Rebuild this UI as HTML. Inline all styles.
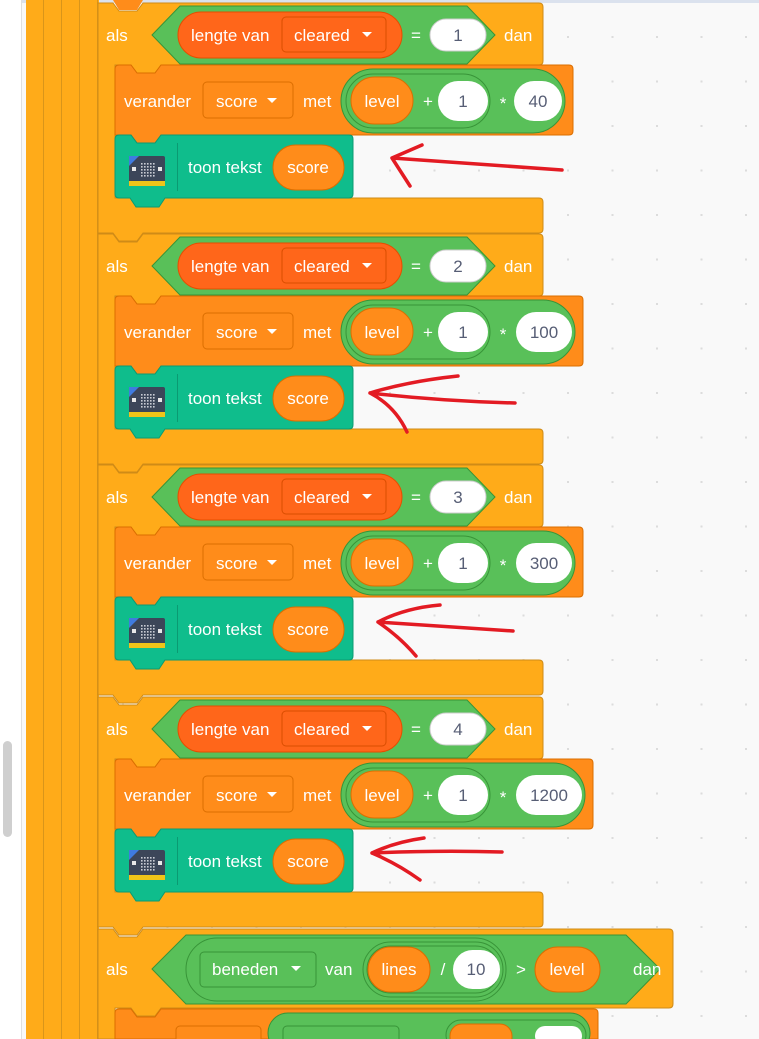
<!DOCTYPE html>
<html><head><meta charset="utf-8"><style>
html,body{margin:0;padding:0;width:759px;height:1039px;overflow:hidden;background:#f9f9f9}
svg{display:block}
text{font-family:"Liberation Sans",sans-serif;font-size:17px;fill:#fff}
.d{fill:#575e75}
.m{text-anchor:middle}
</style></head><body>
<svg width="759" height="1039" viewBox="0 0 759 1039" xmlns="http://www.w3.org/2000/svg">
<defs>
<pattern id="dots" x="33" y="-8.5" width="44.5" height="44.5" patternUnits="userSpaceOnUse">
<rect x="0" y="0" width="2" height="2" fill="#dcdcdc"/>
</pattern>
<pattern id="mb" x="141" y="160" width="3" height="3" patternUnits="userSpaceOnUse">
<rect x="0" y="0" width="1.6" height="1.6" fill="#c9ccd4"/>
</pattern>
</defs>
<rect x="0" y="0" width="759" height="1039" fill="#f9f9f9"/>
<rect x="100" y="0" width="659" height="1039" fill="url(#dots)"/>
<rect x="0" y="0" width="759" height="3" fill="#dbe2ee"/>
<rect x="0" y="0" width="21" height="1039" fill="#ffffff"/>
<rect x="21" y="0" width="1" height="1039" fill="#e0e0e0"/>
<rect x="3" y="741" width="9" height="96" rx="4.5" fill="#cfcfcf"/>
<rect x="26" y="0" width="73" height="1039" fill="#ffab19"/>
<g stroke="#d9951a" stroke-width="1">
<line x1="43.5" y1="0" x2="43.5" y2="1039"/>
<line x1="61.5" y1="0" x2="61.5" y2="1039"/>
<line x1="79.5" y1="0" x2="79.5" y2="1039"/>
<line x1="97.5" y1="0" x2="97.5" y2="1039"/>
</g>
<path d="M113,0 h30 l-6,10 h-18 z" fill="#ff8c1a"/>

<g transform="translate(0,0)">
<path d="M98,3 H113 l6,8 h18 l6,-8 H539 Q543,3 543,7 V61 Q543,65 539,65 H161 l-6,8 h-18 l-6,-8 H115 V198 H539 Q543,198 543,202 V229 Q543,233 539,233 H143 l-6,8 h-18 l-6,-8 H98 Z" fill="#ffab19" stroke="#cf8b17"/>
<text x="106" y="41">als</text>
<path d="M152,35 L180,6 H467 L495,35 L467,64 H180 Z" fill="#59c059" stroke="#389438"/>
<rect x="178" y="12" width="224" height="46" rx="23" fill="#ff661a" stroke="#e64d00"/>
<text x="191" y="41">lengte van</text>
<rect x="282" y="17" width="104" height="35" rx="4" fill="#ff661a" stroke="#d94d00"/>
<text x="294" y="41">cleared</text>
<path d="M362,32 h10 l-5,5 z" fill="#fff"/>
<text x="416" y="41" class="m">=</text>
<rect x="430" y="19" width="56" height="32" rx="16" fill="#fff" stroke="#ccc"/>
<text x="458" y="41" class="d m">1</text>
<text x="504" y="41">dan</text>
<path d="M115,69 Q115,65 119,65 H131 l6,8 h18 l6,-8 H569 Q573,65 573,69 V131 Q573,135 569,135 H161 l-6,8 h-18 l-6,-8 H115 Z" fill="#ff8c1a" stroke="#db6e00"/>
<text x="124" y="107">verander</text>
<rect x="203" y="82" width="90" height="36" rx="4" fill="#ff8c1a" stroke="#db6e00"/>
<text x="216" y="107">score</text>
<path d="M267,98 h10 l-5,5 z" fill="#fff"/>
<text x="303" y="107">met</text>
<rect x="341" y="69" width="224" height="64" rx="32" fill="#59c059" stroke="#389438"/>
<rect x="346" y="74" width="144" height="54" rx="27" fill="none" stroke="#389438"/>
<rect x="351" y="77" width="62" height="47" rx="23.5" fill="#ff8c1a" stroke="#db6e00"/>
<text x="382" y="107" class="m">level</text>
<text x="428" y="107" class="m">+</text>
<rect x="438" y="81" width="50" height="40" rx="20" fill="#fff"/>
<text x="463" y="107" class="d m">1</text>
<text x="503" y="109" class="m">*</text>
<rect x="514" y="81" width="48" height="40" rx="20" fill="#fff"/>
<text x="538" y="107" class="d m">40</text>
<path d="M115,139 Q115,135 119,135 H131 l6,8 h18 l6,-8 H349 Q353,135 353,139 V194 Q353,198 349,198 H165 l-6,9 h-23 l-6,-9 H119 Q115,198 115,194 Z" fill="#0fbd8c" stroke="#0b9a72"/>
<rect x="129" y="156" width="36" height="30" rx="2" fill="#3c4659"/>
<path d="M129,156 h10 l-10,10 z" fill="#3f7be0"/>
<rect x="129" y="181" width="36" height="5" fill="#f0c419"/>
<rect x="141" y="163" width="14" height="14" fill="url(#mb)"/>
<rect x="132" y="167" width="4" height="4" fill="#e8e8e8"/><rect x="158" y="167" width="4" height="4" fill="#e8e8e8"/>
<line x1="177.5" y1="143" x2="177.5" y2="191" stroke="#0b9a72"/>
<text x="188" y="173">toon tekst</text>
<rect x="273" y="145" width="71" height="45" rx="22.5" fill="#ff8c1a" stroke="#db6e00"/>
<text x="308" y="173" class="m">score</text>
<path d="M562,170 L392,158 M392,158 L422,145 M392,158 L410,186" stroke="#e31b23" stroke-width="3.5" fill="none" stroke-linecap="round"/>
</g>

<g transform="translate(0,231)">
<path d="M98,3 H113 l6,8 h18 l6,-8 H539 Q543,3 543,7 V61 Q543,65 539,65 H161 l-6,8 h-18 l-6,-8 H115 V198 H539 Q543,198 543,202 V229 Q543,233 539,233 H143 l-6,8 h-18 l-6,-8 H98 Z" fill="#ffab19" stroke="#cf8b17"/>
<text x="106" y="41">als</text>
<path d="M152,35 L180,6 H467 L495,35 L467,64 H180 Z" fill="#59c059" stroke="#389438"/>
<rect x="178" y="12" width="224" height="46" rx="23" fill="#ff661a" stroke="#e64d00"/>
<text x="191" y="41">lengte van</text>
<rect x="282" y="17" width="104" height="35" rx="4" fill="#ff661a" stroke="#d94d00"/>
<text x="294" y="41">cleared</text>
<path d="M362,32 h10 l-5,5 z" fill="#fff"/>
<text x="416" y="41" class="m">=</text>
<rect x="430" y="19" width="56" height="32" rx="16" fill="#fff" stroke="#ccc"/>
<text x="458" y="41" class="d m">2</text>
<text x="504" y="41">dan</text>
<path d="M115,69 Q115,65 119,65 H131 l6,8 h18 l6,-8 H579 Q583,65 583,69 V131 Q583,135 579,135 H161 l-6,8 h-18 l-6,-8 H115 Z" fill="#ff8c1a" stroke="#db6e00"/>
<text x="124" y="107">verander</text>
<rect x="203" y="82" width="90" height="36" rx="4" fill="#ff8c1a" stroke="#db6e00"/>
<text x="216" y="107">score</text>
<path d="M267,98 h10 l-5,5 z" fill="#fff"/>
<text x="303" y="107">met</text>
<rect x="341" y="69" width="234" height="64" rx="32" fill="#59c059" stroke="#389438"/>
<rect x="346" y="74" width="144" height="54" rx="27" fill="none" stroke="#389438"/>
<rect x="351" y="77" width="62" height="47" rx="23.5" fill="#ff8c1a" stroke="#db6e00"/>
<text x="382" y="107" class="m">level</text>
<text x="428" y="107" class="m">+</text>
<rect x="438" y="81" width="50" height="40" rx="20" fill="#fff"/>
<text x="463" y="107" class="d m">1</text>
<text x="503" y="109" class="m">*</text>
<rect x="516" y="81" width="56" height="40" rx="20" fill="#fff"/>
<text x="544" y="107" class="d m">100</text>
<path d="M115,139 Q115,135 119,135 H131 l6,8 h18 l6,-8 H349 Q353,135 353,139 V194 Q353,198 349,198 H165 l-6,9 h-23 l-6,-9 H119 Q115,198 115,194 Z" fill="#0fbd8c" stroke="#0b9a72"/>
<rect x="129" y="156" width="36" height="30" rx="2" fill="#3c4659"/>
<path d="M129,156 h10 l-10,10 z" fill="#3f7be0"/>
<rect x="129" y="181" width="36" height="5" fill="#f0c419"/>
<rect x="141" y="163" width="14" height="14" fill="url(#mb)"/>
<rect x="132" y="167" width="4" height="4" fill="#e8e8e8"/><rect x="158" y="167" width="4" height="4" fill="#e8e8e8"/>
<line x1="177.5" y1="143" x2="177.5" y2="191" stroke="#0b9a72"/>
<text x="188" y="173">toon tekst</text>
<rect x="273" y="145" width="71" height="45" rx="22.5" fill="#ff8c1a" stroke="#db6e00"/>
<text x="308" y="173" class="m">score</text>
<path d="M515,172 Q440,170 370,162 M370,162 Q410,150 458,145 M370,162 Q395,175 407,201" stroke="#e31b23" stroke-width="3.5" fill="none" stroke-linecap="round"/>
</g>

<g transform="translate(0,462)">
<path d="M98,3 H113 l6,8 h18 l6,-8 H539 Q543,3 543,7 V61 Q543,65 539,65 H161 l-6,8 h-18 l-6,-8 H115 V198 H539 Q543,198 543,202 V229 Q543,233 539,233 H143 l-6,8 h-18 l-6,-8 H98 Z" fill="#ffab19" stroke="#cf8b17"/>
<text x="106" y="41">als</text>
<path d="M152,35 L180,6 H467 L495,35 L467,64 H180 Z" fill="#59c059" stroke="#389438"/>
<rect x="178" y="12" width="224" height="46" rx="23" fill="#ff661a" stroke="#e64d00"/>
<text x="191" y="41">lengte van</text>
<rect x="282" y="17" width="104" height="35" rx="4" fill="#ff661a" stroke="#d94d00"/>
<text x="294" y="41">cleared</text>
<path d="M362,32 h10 l-5,5 z" fill="#fff"/>
<text x="416" y="41" class="m">=</text>
<rect x="430" y="19" width="56" height="32" rx="16" fill="#fff" stroke="#ccc"/>
<text x="458" y="41" class="d m">3</text>
<text x="504" y="41">dan</text>
<path d="M115,69 Q115,65 119,65 H131 l6,8 h18 l6,-8 H579 Q583,65 583,69 V131 Q583,135 579,135 H161 l-6,8 h-18 l-6,-8 H115 Z" fill="#ff8c1a" stroke="#db6e00"/>
<text x="124" y="107">verander</text>
<rect x="203" y="82" width="90" height="36" rx="4" fill="#ff8c1a" stroke="#db6e00"/>
<text x="216" y="107">score</text>
<path d="M267,98 h10 l-5,5 z" fill="#fff"/>
<text x="303" y="107">met</text>
<rect x="341" y="69" width="234" height="64" rx="32" fill="#59c059" stroke="#389438"/>
<rect x="346" y="74" width="144" height="54" rx="27" fill="none" stroke="#389438"/>
<rect x="351" y="77" width="62" height="47" rx="23.5" fill="#ff8c1a" stroke="#db6e00"/>
<text x="382" y="107" class="m">level</text>
<text x="428" y="107" class="m">+</text>
<rect x="438" y="81" width="50" height="40" rx="20" fill="#fff"/>
<text x="463" y="107" class="d m">1</text>
<text x="503" y="109" class="m">*</text>
<rect x="516" y="81" width="56" height="40" rx="20" fill="#fff"/>
<text x="544" y="107" class="d m">300</text>
<path d="M115,139 Q115,135 119,135 H131 l6,8 h18 l6,-8 H349 Q353,135 353,139 V194 Q353,198 349,198 H165 l-6,9 h-23 l-6,-9 H119 Q115,198 115,194 Z" fill="#0fbd8c" stroke="#0b9a72"/>
<rect x="129" y="156" width="36" height="30" rx="2" fill="#3c4659"/>
<path d="M129,156 h10 l-10,10 z" fill="#3f7be0"/>
<rect x="129" y="181" width="36" height="5" fill="#f0c419"/>
<rect x="141" y="163" width="14" height="14" fill="url(#mb)"/>
<rect x="132" y="167" width="4" height="4" fill="#e8e8e8"/><rect x="158" y="167" width="4" height="4" fill="#e8e8e8"/>
<line x1="177.5" y1="143" x2="177.5" y2="191" stroke="#0b9a72"/>
<text x="188" y="173">toon tekst</text>
<rect x="273" y="145" width="71" height="45" rx="22.5" fill="#ff8c1a" stroke="#db6e00"/>
<text x="308" y="173" class="m">score</text>
<path d="M513,169 Q450,165 378,160 M378,160 Q405,146 440,143 M378,160 Q400,175 416,194" stroke="#e31b23" stroke-width="3.5" fill="none" stroke-linecap="round"/>
</g>

<g transform="translate(0,694)">
<path d="M98,3 H113 l6,8 h18 l6,-8 H539 Q543,3 543,7 V61 Q543,65 539,65 H161 l-6,8 h-18 l-6,-8 H115 V198 H539 Q543,198 543,202 V229 Q543,233 539,233 H143 l-6,8 h-18 l-6,-8 H98 Z" fill="#ffab19" stroke="#cf8b17"/>
<text x="106" y="41">als</text>
<path d="M152,35 L180,6 H467 L495,35 L467,64 H180 Z" fill="#59c059" stroke="#389438"/>
<rect x="178" y="12" width="224" height="46" rx="23" fill="#ff661a" stroke="#e64d00"/>
<text x="191" y="41">lengte van</text>
<rect x="282" y="17" width="104" height="35" rx="4" fill="#ff661a" stroke="#d94d00"/>
<text x="294" y="41">cleared</text>
<path d="M362,32 h10 l-5,5 z" fill="#fff"/>
<text x="416" y="41" class="m">=</text>
<rect x="430" y="19" width="56" height="32" rx="16" fill="#fff" stroke="#ccc"/>
<text x="458" y="41" class="d m">4</text>
<text x="504" y="41">dan</text>
<path d="M115,69 Q115,65 119,65 H131 l6,8 h18 l6,-8 H589 Q593,65 593,69 V131 Q593,135 589,135 H161 l-6,8 h-18 l-6,-8 H115 Z" fill="#ff8c1a" stroke="#db6e00"/>
<text x="124" y="107">verander</text>
<rect x="203" y="82" width="90" height="36" rx="4" fill="#ff8c1a" stroke="#db6e00"/>
<text x="216" y="107">score</text>
<path d="M267,98 h10 l-5,5 z" fill="#fff"/>
<text x="303" y="107">met</text>
<rect x="341" y="69" width="244" height="64" rx="32" fill="#59c059" stroke="#389438"/>
<rect x="346" y="74" width="144" height="54" rx="27" fill="none" stroke="#389438"/>
<rect x="351" y="77" width="62" height="47" rx="23.5" fill="#ff8c1a" stroke="#db6e00"/>
<text x="382" y="107" class="m">level</text>
<text x="428" y="107" class="m">+</text>
<rect x="438" y="81" width="50" height="40" rx="20" fill="#fff"/>
<text x="463" y="107" class="d m">1</text>
<text x="503" y="109" class="m">*</text>
<rect x="516" y="81" width="66" height="40" rx="20" fill="#fff"/>
<text x="549" y="107" class="d m">1200</text>
<path d="M115,139 Q115,135 119,135 H131 l6,8 h18 l6,-8 H349 Q353,135 353,139 V194 Q353,198 349,198 H165 l-6,9 h-23 l-6,-9 H119 Q115,198 115,194 Z" fill="#0fbd8c" stroke="#0b9a72"/>
<rect x="129" y="156" width="36" height="30" rx="2" fill="#3c4659"/>
<path d="M129,156 h10 l-10,10 z" fill="#3f7be0"/>
<rect x="129" y="181" width="36" height="5" fill="#f0c419"/>
<rect x="141" y="163" width="14" height="14" fill="url(#mb)"/>
<rect x="132" y="167" width="4" height="4" fill="#e8e8e8"/><rect x="158" y="167" width="4" height="4" fill="#e8e8e8"/>
<line x1="177.5" y1="143" x2="177.5" y2="191" stroke="#0b9a72"/>
<text x="188" y="173">toon tekst</text>
<rect x="273" y="145" width="71" height="45" rx="22.5" fill="#ff8c1a" stroke="#db6e00"/>
<text x="308" y="173" class="m">score</text>
<path d="M502,158 Q440,156 372,159 M372,159 Q395,148 424,144 M372,159 Q398,170 420,186" stroke="#e31b23" stroke-width="3.5" fill="none" stroke-linecap="round"/>
</g>

<path d="M98,929 H113 l6,8 h18 l6,-8 H669 Q673,929 673,933 V1004 Q673,1008 669,1008 H161 l-6,8 h-18 l-6,-8 H115 V1039 H98 Z" fill="#ffab19" stroke="#cf8b17"/>
<text x="106" y="975">als</text>
<path d="M152,969 L186,935 H626 L660,969 L626,1004 H186 Z" fill="#59c059" stroke="#389438"/>
<rect x="186" y="938" width="320" height="63" rx="31" fill="#59c059" stroke="#389438"/>
<rect x="200" y="952" width="116" height="35" rx="4" fill="#59c059" stroke="#389438"/>
<text x="212" y="975">beneden</text>
<path d="M291,966 h10 l-5,5 z" fill="#fff"/>
<text x="325" y="975">van</text>
<rect x="363" y="942" width="140" height="55" rx="27.5" fill="#59c059" stroke="#389438"/>
<rect x="367" y="946" width="132" height="47" rx="23.5" fill="none" stroke="#389438"/>
<rect x="368" y="947" width="62" height="45" rx="22.5" fill="#ff8c1a" stroke="#db6e00"/>
<text x="399" y="975" class="m">lines</text>
<text x="443" y="975" class="m">/</text>
<rect x="453" y="950" width="47" height="39" rx="19.5" fill="#fff"/>
<text x="476" y="975" class="d m">10</text>
<text x="521" y="975" class="m">&gt;</text>
<rect x="535" y="947" width="65" height="45" rx="22.5" fill="#ff8c1a" stroke="#db6e00"/>
<text x="567" y="975" class="m">level</text>
<text x="633" y="975">dan</text>
<path d="M115,1013 Q115,1009 119,1009 H131 l6,8 h18 l6,-8 H594 Q598,1009 598,1013 V1039 H115 Z" fill="#ff8c1a" stroke="#db6e00"/>
<rect x="176" y="1026" width="85" height="20" rx="4" fill="#ff8c1a" stroke="#db6e00"/>
<rect x="268" y="1013" width="322" height="40" rx="20" fill="#59c059" stroke="#389438"/>
<rect x="283" y="1026" width="116" height="20" rx="4" fill="#59c059" stroke="#389438"/>
<rect x="446" y="1020" width="140" height="30" rx="15" fill="none" stroke="#389438"/>
<rect x="450" y="1024" width="62" height="25" rx="12" fill="#ff8c1a" stroke="#db6e00"/>
<rect x="535" y="1026" width="47" height="20" rx="10" fill="#fff"/>
</svg>
</body></html>
